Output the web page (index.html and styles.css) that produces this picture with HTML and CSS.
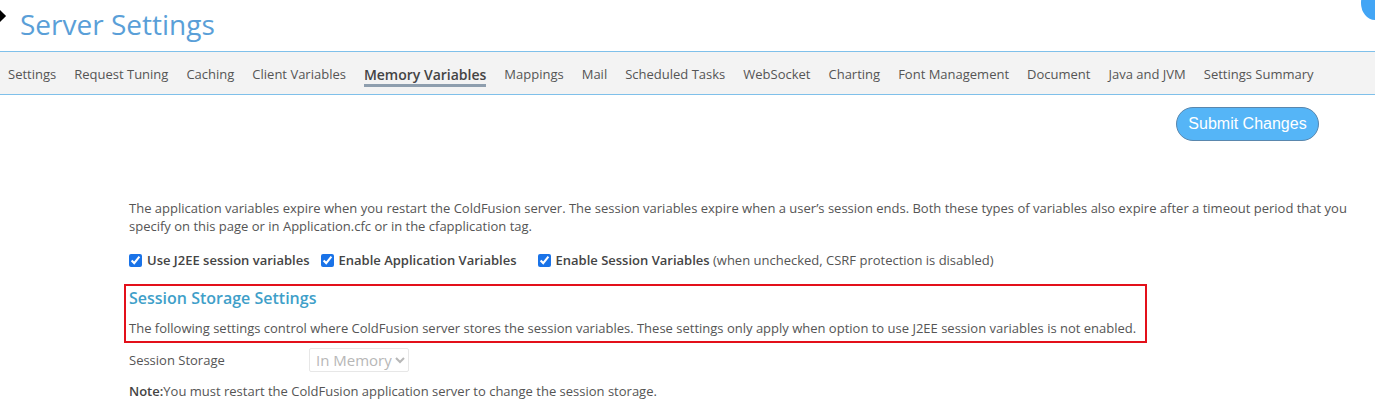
FILE: index.html
```html
<!DOCTYPE html>
<html>
<head>
<meta charset="utf-8">
<link rel="stylesheet" href="styles.css">
</head>
<body>
<div class="diamond"></div>
<div class="blob"></div>
<header class="header">
  <h1 class="title">Server Settings</h1>
</header>
<nav class="tabs">
  <span class="tab">Settings</span>
  <span class="tab">Request Tuning</span>
  <span class="tab">Caching</span>
  <span class="tab">Client Variables</span>
  <span class="tab active">Memory Variables</span>
  <span class="tab">Mappings</span>
  <span class="tab">Mail</span>
  <span class="tab">Scheduled Tasks</span>
  <span class="tab">WebSocket</span>
  <span class="tab">Charting</span>
  <span class="tab">Font Management</span>
  <span class="tab">Document</span>
  <span class="tab">Java and JVM</span>
  <span class="tab">Settings Summary</span>
</nav>
<div class="actions">
  <button class="submit">Submit Changes</button>
</div>
<main class="content">
  <p class="intro">The application variables expire when you restart the ColdFusion server. The session variables expire when a user’s session ends. Both these types of variables also expire after a timeout period that you specify on this page or in Application.cfc or in the cfapplication tag.</p>
  <div class="checks">
    <label class="check c1"><input type="checkbox" checked><span class="strong">Use J2EE session variables</span></label>
    <label class="check c2"><input type="checkbox" checked><span class="strong">Enable Application Variables</span></label>
    <label class="check"><input type="checkbox" checked><span class="strong">Enable Session Variables</span>&nbsp;(when unchecked, CSRF protection is disabled)</label>
  </div>
  <section class="storage">
    <h2 class="storage-title">Session Storage Settings</h2>
    <p class="storage-desc">The following settings control where ColdFusion server stores the session variables. These settings only apply when option to use J2EE session variables is not enabled.</p>
  </section>
  <div class="field">
    <span class="field-label">Session Storage</span>
    <select class="select" disabled><option>In Memory</option></select>
  </div>
  <p class="note"><span class="strong">Note:</span>You must restart the ColdFusion application server to change the session storage.</p>
</main>
</body>
</html>
```
FILE: styles.css
```css
html, body {
  margin: 0;
  padding: 0;
  background: #fff;
  font-family: "Open Sans", "Noto Sans", sans-serif;
  color: #555;
  overflow: hidden;
}
.diamond {
  position: absolute;
  left: -6px;
  top: 11px;
  width: 10px;
  height: 10px;
  background: #000;
  transform: rotate(45deg);
}
.blob {
  position: absolute;
  right: -14px;
  top: -14px;
  width: 28px;
  height: 34px;
  border-radius: 50%;
  background: #42a5f5;
}
.header {
  height: 51px;
  border-bottom: 1px solid #7fc0ea;
  display: flex;
  align-items: center;
  padding-left: 20px;
}
.title {
  margin: 0;
  margin-top: -4px;
  font-size: 28px;
  font-weight: 400;
  color: #5a9fd8;
}
.tabs {
  display: flex;
  gap: 18px;
  height: 40px;
  padding: 2px 0 0 8px;
  background: #f3f3f3;
  border-bottom: 1px solid #7fc0ea;
  align-items: center;
}
.tab {
  font-size: 13px;
  color: #555;
  white-space: nowrap;
  position: relative;
}
.tab.active {
  color: #444;
  font-weight: 600;
  font-size: 14px;
}
.tab.active::after {
  content: "";
  position: absolute;
  left: 0;
  right: 0;
  bottom: -3px;
  height: 3px;
  background: #8e9eae;
}
.actions {
  display: flex;
  justify-content: flex-end;
  padding: 12px 56px 0 0;
  height: 45px;
}
.submit {
  font-family: "Liberation Sans", Arial, sans-serif;
  font-size: 16px;
  color: #fff;
  background: #55b5f7;
  border: 1px solid #5a87ad;
  border-radius: 17px;
  height: 34px;
  width: 143px;
  padding: 0;
}
.content {
  padding: 0 20px 0 129px;
}
.intro {
  margin: 47px 0 0 0;
  font-size: 13px;
  line-height: 18px;
  color: #555;
}
.checks {
  display: flex;
  align-items: center;
  margin-top: 16px;
  font-size: 13px;
  color: #555;
}
.check {
  display: flex;
  align-items: center;
  white-space: nowrap;
}
.check input {
  margin: 0 5px 0 0;
  width: 13px;
  height: 13px;
  accent-color: #1a73e8;
}
.c1 { margin-right: 11px; }
.c2 { margin-right: 21px; }
.strong {
  font-weight: 600;
  color: #444;
}
.storage {
  margin: 15px 0 0 -5px;
  width: 1016px;
  border: 2px solid #e3101a;
  padding: 1px 0 4px 3px;
}
.storage-title {
  margin: 0;
  font-size: 16px;
  font-weight: 600;
  color: #3f9fc9;
  line-height: 22px;
}
.storage-desc {
  margin: 10px 0 0 0;
  font-size: 13px;
  line-height: 18px;
  color: #555;
}
.field {
  display: flex;
  align-items: center;
  margin-top: 5px;
  font-size: 13px;
}
.field-label {
  width: 180px;
}
.select {
  font-family: "Open Sans", sans-serif;
  font-size: 15px;
  color: #999;
  background: #fff;
  border: 1px solid #ddd;
  border-radius: 2px;
  height: 24px;
  width: 100px;
  padding: 0 0 0 2px;
}
.note {
  margin: 10px 0 0 0;
  font-size: 13px;
  line-height: 18px;
}
```
